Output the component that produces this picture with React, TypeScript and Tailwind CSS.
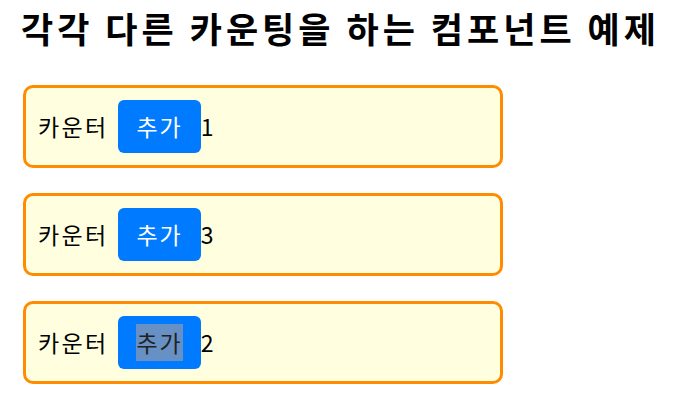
import React from "react";

const font = { fontFamily: '"Noto Sans CJK KR", "Noto Sans", sans-serif' };

function Counter({ count, selected }: { count: number; selected?: boolean }) {
  return (
    <div className="flex w-[480px] h-[83px] items-center rounded-[10px] border-[3px] border-[#ff8c00] bg-[#ffffe0] px-[12px] text-[23px] text-black">
      <span className="tracking-[2.3px]">카운터</span>
      <button className="ml-[10px] flex h-[53px] items-center rounded-[6px] bg-[#007bff] px-[18px] text-[23px] text-white">
        {selected ? (
          <span className="bg-[#6790c4] text-[#222] leading-[37px] tracking-[2px]">추가</span>
        ) : (
          <span className="leading-[37px] tracking-[2px]">추가</span>
        )}
      </button>
      <span>{count}</span>
    </div>
  );
}

export default function App() {
  return (
    <div className="min-h-[415px] w-[691px] bg-white pl-[23px] pt-[4px]" style={font}>
      <h1 className="ml-[-2px] text-[35px] font-bold leading-[48px] tracking-[4px] text-black">각각 다른 카운팅을 하는 컴포넌트 예제</h1>
      <div className="mt-[33px] flex flex-col gap-[25px]">
        <Counter count={1} />
        <Counter count={3} />
        <Counter count={2} selected />
      </div>
    </div>
  );
}
